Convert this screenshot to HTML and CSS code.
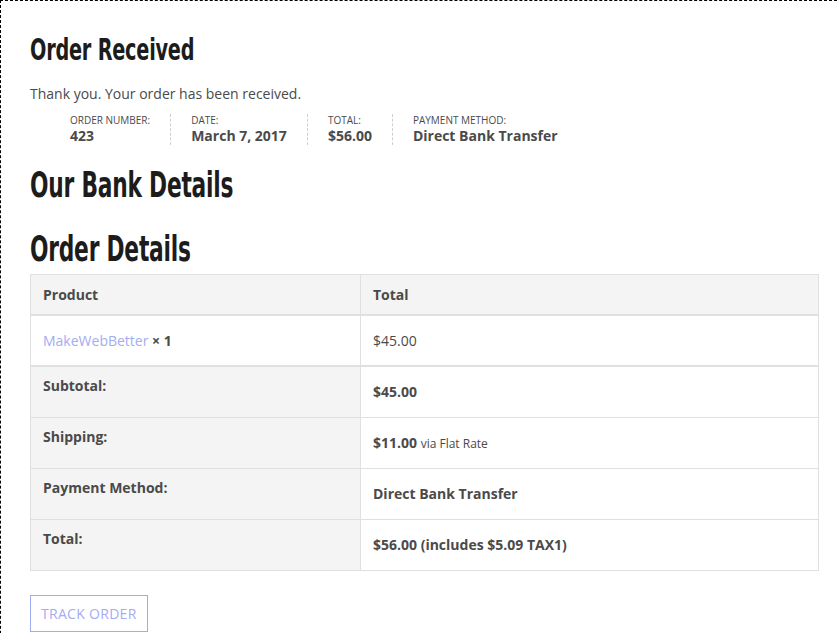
FILE: index.html
```html
<!DOCTYPE html>
<html>
<head>
<meta charset="utf-8">
<link rel="stylesheet" href="styles.css">
</head>
<body>
<div class="page">
  <h1 class="title">Order Received</h1>
  <p class="thanks">Thank you. Your order has been received.</p>
  <ul class="overview">
    <li class="ov-item"><span class="ov-label">Order Number:</span><strong class="ov-value">423</strong></li>
    <li class="ov-item"><span class="ov-label">Date:</span><strong class="ov-value">March 7, 2017</strong></li>
    <li class="ov-item"><span class="ov-label">Total:</span><strong class="ov-value">$56.00</strong></li>
    <li class="ov-item ov-last"><span class="ov-label">Payment Method:</span><strong class="ov-value">Direct Bank Transfer</strong></li>
  </ul>
  <h2 class="section">Our Bank Details</h2>
  <h2 class="section">Order Details</h2>
  <table class="details">
    <thead>
      <tr><th class="col-product">Product</th><th class="col-total">Total</th></tr>
    </thead>
    <tbody>
      <tr class="item-row"><td><a class="link" href="#">MakeWebBetter</a> <strong>× 1</strong></td><td>$45.00</td></tr>
    </tbody>
    <tfoot>
      <tr class="first-foot"><th>Subtotal:</th><td><strong>$45.00</strong></td></tr>
      <tr><th>Shipping:</th><td><strong>$11.00</strong> <small class="via">via Flat Rate</small></td></tr>
      <tr><th>Payment Method:</th><td><strong>Direct Bank Transfer</strong></td></tr>
      <tr><th>Total:</th><td><strong>$56.00 (includes $5.09 TAX1)</strong></td></tr>
    </tfoot>
  </table>
  <a class="track" href="#">Track Order</a>
</div>
</body>
</html>
```
FILE: styles.css
```css
html, body { margin: 0; padding: 0; background: #fff; }
body { font-family: "Open Sans", "DejaVu Sans", sans-serif; color: #4a4a4a; font-size: 14px; }
.page {
  border-top: 1px dashed #000;
  border-left: 1px dashed #000;
  padding: 28px 18px 40px 29px;
  min-height: 700px;
}
.title, .section {
  font-family: "DejaVu Sans Condensed", "DejaVu Sans", sans-serif;
  font-weight: 700;
  color: #1c1c1c;
  margin: 0;
  letter-spacing: -0.3px;
  transform: scaleX(0.69);
  transform-origin: left center;
  white-space: nowrap;
}
.title { font-size: 31px; line-height: 40px; }
.section { font-size: 35px; line-height: 44px; }
.thanks { margin: 15px 0 0; line-height: 20px; font-size: 14px; }
.overview {
  list-style: none;
  margin: 10px 0 0;
  padding: 0 0 0 40px;
  display: flex;
}
.ov-item {
  display: flex;
  flex-direction: column;
  padding-right: 20px;
  margin-right: 20px;
  border-right: 1px dashed #d0d0d0;
}
.ov-last { border-right: none; }
.ov-label { text-transform: uppercase; font-size: 10px; line-height: 13px; }
.ov-value { font-size: 14px; line-height: 18px; font-weight: 700; }
.overview + .section { margin-top: 18px; }
.section + .section { margin-top: 20px; }
.details {
  width: 100%;
  border-collapse: collapse;
  margin-top: 3px;
  border: 1px solid #e0e0e0;
}
.details th, .details td {
  border: 1px solid #e0e0e0;
  text-align: left;
  padding: 0 12px;
  font-size: 14px;
  line-height: 20px;
}
.details thead th { background: #f4f4f4; height: 39px; font-weight: 700; }
.col-product { width: 305px; }
.details tbody td { height: 49px; border-top: 2px solid #e0e0e0; }
.details tfoot th {
  background: #f4f4f4;
  vertical-align: top;
  padding-top: 9px;
  height: 41px;
  font-weight: 700;
}
.details tfoot td { vertical-align: middle; }
.details tfoot .first-foot th, .details tfoot .first-foot td { border-top: 2px solid #e0e0e0; }
.link { color: #a4acf4; text-decoration: none; }
.via { font-size: 12px; }
.track {
  display: inline-block;
  margin-top: 24px;
  border: 1px solid #a0acf2;
  color: #a4acf4;
  text-decoration: none;
  text-transform: uppercase;
  font-size: 14px;
  line-height: 20px;
  letter-spacing: 0.3px;
  padding: 8px 10px 7px 10px;
}
```
